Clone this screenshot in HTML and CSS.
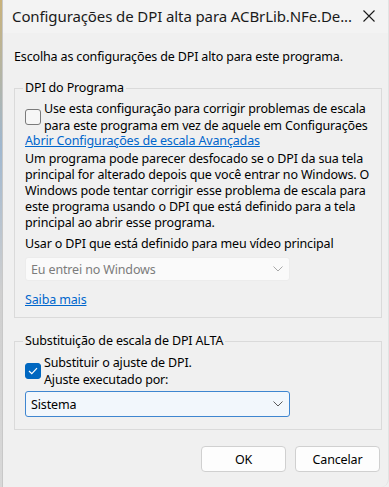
FILE: index.html
```html
<!DOCTYPE html>
<html lang="pt-BR">
<head>
<meta charset="utf-8">
<title>Configurações de DPI alta</title>
<link rel="stylesheet" href="styles.css">
</head>
<body>
<div class="screen">
  <div class="edge"></div>
  <div class="window">
    <div class="titlebar">
      <span class="title">Configurações de DPI alta para ACBrLib.NFe.De...</span>
      <svg class="close" width="12" height="12" viewBox="0 0 12 12"><path d="M0.5 0.5 L11.5 11.5 M11.5 0.5 L0.5 11.5" stroke="#1a1a1a" stroke-width="1.1" fill="none"/></svg>
    </div>
    <div class="content">
      <p class="intro">Escolha as configurações de DPI alto para este programa.</p>
      <fieldset class="group group-first">
        <legend>DPI do Programa</legend>
        <div class="check">
          <span class="box"></span>
          <span class="check-label">Use esta configuração para corrigir problemas de escala<br>para este programa em vez de aquele em Configurações</span>
        </div>
        <a class="link link-adv" href="#">Abrir Configurações de escala Avançadas</a>
        <p class="para">Um programa pode parecer desfocado se o DPI da sua tela<br>principal for alterado depois que você entrar no Windows. O<br>Windows pode tentar corrigir esse problema de escala para<br>este programa usando o DPI que está definido para a tela<br>principal ao abrir esse programa.</p>
        <p class="usar">Usar o DPI que está definido para meu vídeo principal</p>
        <div class="select select-disabled">
          <span>Eu entrei no Windows</span>
          <svg class="chev" width="10" height="6" viewBox="0 0 10 6"><path d="M0.5 0.5 L5 5 L9.5 0.5" stroke="#a8a8a8" stroke-width="1" fill="none"/></svg>
        </div>
        <a class="link link-saiba" href="#">Saiba mais</a>
      </fieldset>
      <fieldset class="group group-second">
        <legend>Substituição de escala de DPI ALTA</legend>
        <div class="check">
          <span class="box box-checked"><svg width="10" height="8" viewBox="0 0 10 8"><path d="M1 4 L3.8 6.6 L9 1.2" stroke="#fff" stroke-width="1.2" fill="none"/></svg></span>
          <span class="check-label">Substituir o ajuste de DPI.<br>Ajuste executado por:</span>
        </div>
        <div class="select select-active">
          <span>Sistema</span>
          <svg class="chev" width="10" height="6" viewBox="0 0 10 6"><path d="M0.5 0.5 L5 5 L9.5 0.5" stroke="#5a5a5a" stroke-width="1" fill="none"/></svg>
        </div>
      </fieldset>
      <div class="buttons">
        <button class="btn" type="button">OK</button>
        <button class="btn" type="button">Cancelar</button>
      </div>
    </div>
  </div>
</div>
</body>
</html>
```
FILE: styles.css
```css
* { box-sizing: border-box; }
html, body {
  margin: 0;
  padding: 0;
  width: 389px;
  height: 487px;
  overflow: hidden;
  background: #f0f0f0;
}
body {
  font-family: "Noto Sans", "Open Sans", sans-serif;
  font-size: 12.5px;
  letter-spacing: -0.15px;
  color: #000;
}
.screen {
  display: flex;
  width: 389px;
  height: 487px;
}
.edge {
  width: 2px;
  flex: none;
  background: linear-gradient(#c9b27a, #9fb7cf 30%, #cfcfcf 60%, #d8d8d8);
}
.window {
  flex: 1;
  min-width: 0;
  overflow: hidden;
  background: #f0f0f0;
  border-left: 1px solid #c8c8c8;
  border-right: 1px solid #e2e2e2;
  border-bottom-right-radius: 8px;
  display: flex;
  flex-direction: column;
}
.titlebar {
  height: 33px;
  flex: none;
  background: #f3f3f3;
  display: flex;
  align-items: center;
  justify-content: space-between;
  padding: 0 13px 2px 9px;
}
.title {
  font-size: 15px;
  letter-spacing: -0.1px;
  color: #1a1a1a;
  white-space: nowrap;
}
.close { flex: none; }
.content {
  padding: 0 5px 0 11px;
  display: flex;
  flex-direction: column;
}
.intro {
  margin: 16px 0 0;
  line-height: 16px;
  white-space: nowrap;
}
.group {
  margin: 0;
  width: 368px;
  border: 1px solid #dadada;
  padding: 4px 10px 9px;
  display: flex;
  flex-direction: column;
  align-items: flex-start;
  min-width: 0;
}
.group legend {
  padding: 0 2px;
  margin-left: -2px;
  line-height: 16px;
  white-space: nowrap;
}
.group-first { margin-top: 15px; }
.group-second { margin-top: 15px; padding: 5px 10px 12px; }
.check {
  display: flex;
  align-items: center;
  gap: 3px;
}
.box {
  width: 16px;
  height: 16px;
  flex: none;
  border: 1px solid #7a7a7a;
  border-radius: 3px;
  background: #f6f6f6;
  display: flex;
  align-items: center;
  justify-content: center;
}
.box-checked {
  background: #0067c0;
  border-color: #0067c0;
}
.check-label {
  line-height: 17px;
  white-space: nowrap;
}
.link {
  color: #0066cc;
  text-decoration: underline;
  line-height: 16px;
  white-space: nowrap;
}
.link-adv { line-height: 14px; }
.para {
  margin: 3px 0 0;
  line-height: 16px;
  white-space: nowrap;
}
.usar {
  margin: 5px 0 0;
  line-height: 16px;
  white-space: nowrap;
}
.select {
  width: 265px;
  display: flex;
  align-items: center;
  justify-content: space-between;
  padding: 0 6px 0 5px;
}
.select-disabled {
  margin-top: 5px;
  height: 24px;
  background: #fafafa;
  border: 1px solid #ececec;
  border-radius: 3px;
  color: #7c7c7c;
}
.select-active {
  margin-top: 3px;
  height: 26px;
  background: #f2f7fc;
  border: 1px solid #3f86d0;
  border-radius: 3px;
  color: #000;
}
.link-saiba { margin-top: 11px; }
.buttons {
  margin-top: 16px;
  display: flex;
  justify-content: flex-end;
  gap: 9px;
  padding-right: 3px;
}
.btn {
  width: 85px;
  height: 26px;
  font: inherit;
  letter-spacing: inherit;
  color: #000;
  background: #fdfdfd;
  border: 1px solid #d0d0d0;
  border-radius: 4px;
  padding: 0;
}
```
